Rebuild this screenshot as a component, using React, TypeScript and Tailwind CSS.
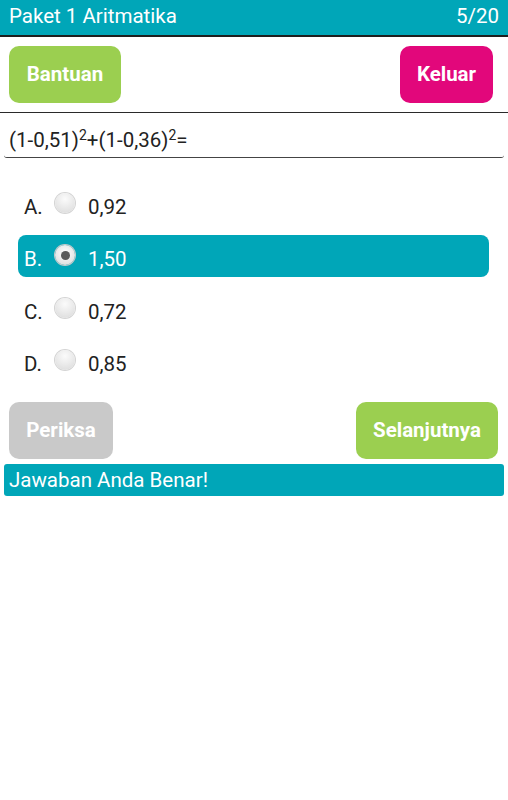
import { useState } from 'react';

type Option = { key: string; value: string };

const options: Option[] = [
  { key: 'A.', value: '0,92' },
  { key: 'B.', value: '1,50' },
  { key: 'C.', value: '0,72' },
  { key: 'D.', value: '0,85' },
];

function Radio({ checked }: { checked: boolean }) {
  if (checked) {
    return (
      <span className="flex h-[20px] w-[20px] items-center justify-center rounded-full bg-[radial-gradient(circle_at_50%_40%,#ffffff,#d6d6d6)] shadow-[0_0_0_1px_#c8c8c8]">
        <span className="h-[9px] w-[9px] rounded-full bg-[#5a5a5a]" />
      </span>
    );
  }
  return (
    <span className="block h-[20px] w-[20px] rounded-full bg-[radial-gradient(circle_at_50%_30%,#fbfbfb,#d9d9d9)] shadow-[0_0_0_1px_#d4d4d4]" />
  );
}

export default function App() {
  const [selected, setSelected] = useState(1);

  return (
    <div className="min-h-[800px] w-[508px] bg-white font-['Roboto','Liberation_Sans',sans-serif] text-[#222]">
      <div className="flex h-[37px] items-center justify-between border-b-2 border-[#1e1e1e] bg-[#00a6b8] px-[9px] pb-[2px] text-[20.5px] text-white">
        <span>Paket 1 Aritmatika</span>
        <span>5/20</span>
      </div>

      <div className="flex items-start justify-between py-[9px] pl-[9px] pr-[15px]">
        <button
          type="button"
          className="h-[57px] w-[112px] rounded-[10px] bg-[#9bcf50] text-[20.5px] font-bold text-white"
        >
          Bantuan
        </button>
        <button
          type="button"
          className="h-[57px] w-[93px] rounded-[10px] bg-[#e2077b] text-[20.5px] font-bold text-white"
        >
          Keluar
        </button>
      </div>

      <div className="border-t-[1.5px] border-[#2a2a2a]" />

      <div className="mx-[4px] flex h-[45px] items-end rounded-b-[3px] border-b-[1.5px] border-[#444] pb-[1px] pl-[5px] text-[20.5px]">
        <span>
          (1-0,51)<sup className="text-[14px]">2</sup>+(1-0,36)<sup className="text-[14px]">2</sup>=
        </span>
      </div>

      <div className="mt-[24px] flex flex-col">
        {options.map((opt, i) => {
          const active = i === selected;
          return (
            <div key={opt.key} className="h-[52.5px] px-[18px]">
              <button
                type="button"
                onClick={() => setSelected(i)}
                className={`flex h-[42px] w-[471px] items-center rounded-[8px] pl-[6px] text-left text-[20.5px] ${
                  active ? 'bg-[#00a6b8] text-white' : 'bg-transparent text-[#222]'
                }`}
              >
                <span className="w-[31px] pt-[8px]">{opt.key}</span>
                <span className="mb-[1px]">
                  <Radio checked={active} />
                </span>
                <span className="ml-[13px] pt-[8px]">{opt.value}</span>
              </button>
            </div>
          );
        })}
      </div>

      <div className="mt-[10px] flex items-start justify-between pl-[9px] pr-[10px]">
        <button
          type="button"
          className="h-[57px] w-[104px] rounded-[10px] bg-[#c9c9c9] text-[20.5px] font-bold text-white"
        >
          Periksa
        </button>
        <button
          type="button"
          className="h-[57px] w-[142px] rounded-[10px] bg-[#9bcf50] text-[20.5px] font-bold text-white"
        >
          Selanjutnya
        </button>
      </div>

      <div className="mx-[4px] mt-[5px] flex h-[32px] items-center rounded-[3px] bg-[#00a6b8] px-[5px] text-[20.5px] text-white">
        Jawaban Anda Benar!
      </div>
    </div>
  );
}
